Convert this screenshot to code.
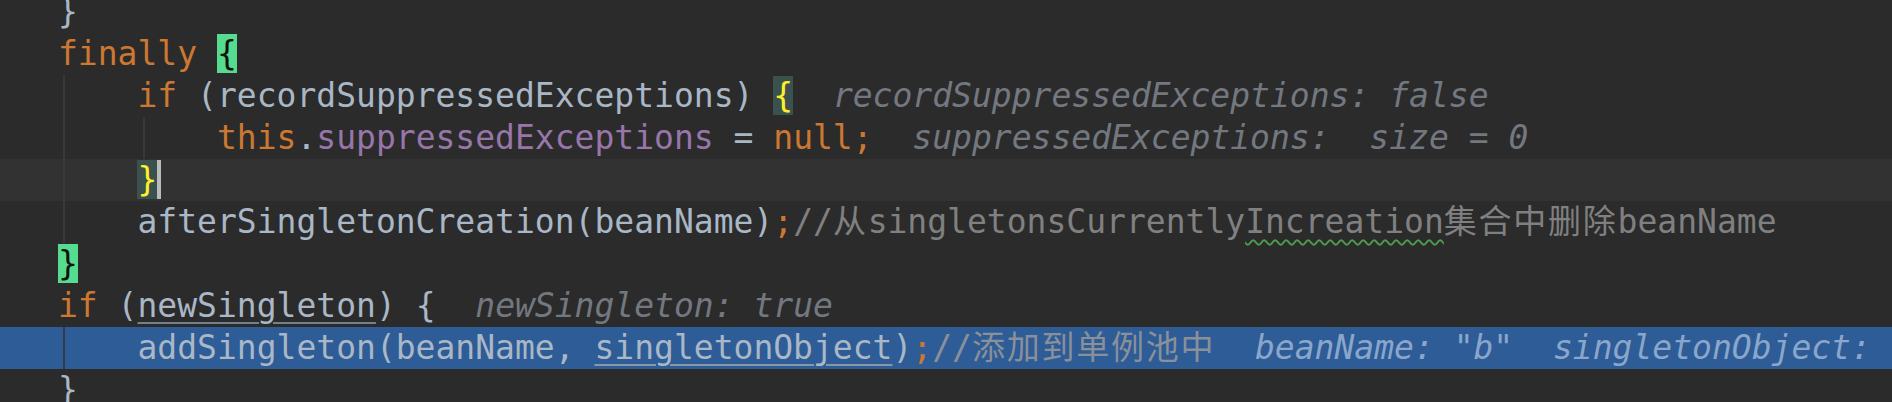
import React from "react";

const K = "text-[#cc7832]";
const I = "text-[#a9b7c6]";
const P = "text-[#9876aa]";
const C = "text-[#808080]";
const H = "italic text-[#737880]";

function Row({
  bg = "",
  guides = [],
  guideColor = "bg-[#393939]",
  children,
}: {
  bg?: string;
  guides?: number[];
  guideColor?: string;
  children?: React.ReactNode;
}) {
  return (
    <div className={`relative h-[42px] leading-[42px] whitespace-pre pl-[58px] ${bg}`}>
      {guides.map((g) => (
        <span
          key={g}
          className={`absolute top-0 bottom-0 w-[2px] ${guideColor}`}
          style={{ left: g }}
        />
      ))}
      <span className="relative">{children}</span>
    </div>
  );
}

const CJK = ({ children }: { children: React.ReactNode }) => (
  <span className="tracking-[1.75px]">{children}</span>
);

export default function App() {
  return (
    <div className="w-[1892px] h-[402px] overflow-hidden bg-[#2b2b2b] text-[33px] text-[#a9b7c6] [font-family:'DejaVu_Sans_Mono','Noto_Sans_CJK_SC',monospace]">
      <div className="-mt-[9px]">
        <Row>
          <span className={I}>{"}"}</span>
        </Row>
        <Row>
          <span className={K}>finally </span>
          <span className="bg-[#55dc8e] text-[#111]">{"{"}</span>
        </Row>
        <Row guides={[63]}>
          <span className={K}>{"    if "}</span>
          <span className={I}>(recordSuppressedExceptions) </span>
          <span className="bg-[#3b514d] text-[#ffef28]">{"{"}</span>
          <span>{"  "}</span>
          <span className={H}>recordSuppressedExceptions: false</span>
        </Row>
        <Row guides={[63, 143]}>
          <span className={K}>{"        this"}</span>
          <span className={I}>.</span>
          <span className={P}>suppressedExceptions</span>
          <span className={I}>{" = "}</span>
          <span className={K}>null;</span>
          <span>{"  "}</span>
          <span className={H}>{"suppressedExceptions:  size = 0"}</span>
        </Row>
        <Row bg="bg-[#323232]" guides={[63]}>
          <span>{"    "}</span>
          <span className="relative bg-[#3b514d] text-[#ffef28]">
            {"}"}
            <span className="absolute top-0 bottom-0 -right-[4px] w-[4px] bg-[#bbbbbb]" />
          </span>
        </Row>
        <Row guides={[63]}>
          <span className={I}>{"    afterSingletonCreation(beanName)"}</span>
          <span className={K}>;</span>
          <span className={C}>
            //<CJK>从</CJK>singletonsCurrently
            <span className="underline decoration-wavy decoration-[#4f9a4f] decoration-[1.5px] underline-offset-[6px]">
              Increation
            </span>
            <CJK>集合中删除</CJK>beanName
          </span>
        </Row>
        <Row>
          <span className="bg-[#55dc8e] text-[#111]">{"}"}</span>
        </Row>
        <Row>
          <span className={K}>if </span>
          <span className={I}>(</span>
          <span className="underline decoration-[#75808d] decoration-2 underline-offset-[5px]">newSingleton</span>
          <span className={I}>{") {"}</span>
          <span>{"  "}</span>
          <span className={H}>newSingleton: true</span>
        </Row>
        <Row bg="bg-[#2d5c97]" guides={[63]} guideColor="bg-[#333b45]">
          <span className={I}>{"    addSingleton(beanName, "}</span>
          <span className="underline decoration-[#8797ab] decoration-2 underline-offset-[5px]">singletonObject</span>
          <span className={I}>)</span>
          <span className={K}>;</span>
          <span className="text-[#8a9099]">
            //<CJK>添加到单例池中</CJK>
          </span>
          <span>{"  "}</span>
          <span className="italic text-[#8aa6cb]">{'beanName: "b"  singletonObject: '}</span>
        </Row>
        <Row>
          <span className={I}>{"}"}</span>
        </Row>
      </div>
    </div>
  );
}
